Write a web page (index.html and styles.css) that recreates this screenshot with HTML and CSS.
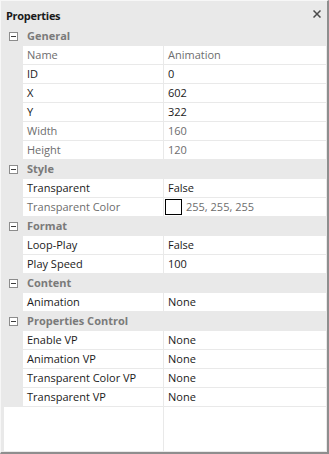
FILE: index.html
```html
<!DOCTYPE html>
<html lang="en">
<head>
  <meta charset="UTF-8"/>
  <title>Properties</title>
  <link rel="stylesheet" href="styles.css">
</head>
<body>
  <div class="panel">
    <div class="titlebar">
      <span class="title">Properties</span>
      <svg class="close" width="8" height="8" viewBox="0 0 8 8">
        <path d="M0.5 0.5 L7.5 7.5 M7.5 0.5 L0.5 7.5" stroke="#4a4a4a" stroke-width="1.5" fill="none"/>
      </svg>
    </div>

    <div class="grid">
      <!-- General -->
      <div class="cat"><span class="toggle"></span>General</div>
      <div class="row ro"><div class="name">Name</div><div class="value">Animation</div></div>
      <div class="row"><div class="name">ID</div><div class="value">0</div></div>
      <div class="row"><div class="name">X</div><div class="value">602</div></div>
      <div class="row"><div class="name">Y</div><div class="value">322</div></div>
      <div class="row ro"><div class="name">Width</div><div class="value">160</div></div>
      <div class="row ro"><div class="name">Height</div><div class="value">120</div></div>

      <!-- Style -->
      <div class="cat"><span class="toggle"></span>Style</div>
      <div class="row"><div class="name">Transparent</div><div class="value">False</div></div>
      <div class="row ro"><div class="name">Transparent Color</div><div class="value"><span class="swatch"></span>255, 255, 255</div></div>

      <!-- Format -->
      <div class="cat"><span class="toggle"></span>Format</div>
      <div class="row"><div class="name">Loop-Play</div><div class="value">False</div></div>
      <div class="row"><div class="name">Play Speed</div><div class="value">100</div></div>

      <!-- Content -->
      <div class="cat"><span class="toggle"></span>Content</div>
      <div class="row"><div class="name">Animation</div><div class="value">None</div></div>

      <!-- Properties Control -->
      <div class="cat"><span class="toggle"></span>Properties Control</div>
      <div class="row"><div class="name">Enable VP</div><div class="value">None</div></div>
      <div class="row"><div class="name">Animation VP</div><div class="value">None</div></div>
      <div class="row"><div class="name">Transparent Color VP</div><div class="value">None</div></div>
      <div class="row"><div class="name">Transparent VP</div><div class="value">None</div></div>

      <div class="filler"><div class="name"></div><div class="value"></div></div>
    </div>
  </div>
</body>
</html>
```

FILE: styles.css
```css
* { box-sizing: border-box; margin: 0; padding: 0; }
html, body { height: 100%; background: #e9e9e9; }
body { font-family: 'Open Sans', sans-serif; font-size: 11px; color: #1a1a1a; }

/* Panel frame */
.panel {
  width: 329px; height: 454px;
  display: flex; flex-direction: column;
  background: #e9e9e9;
  border-top: 1px solid #f7f7f7;
  border-left: 1px solid #f7f7f7;
  border-right: 2px solid #8e8e8e;
  border-bottom: 2px solid #8e8e8e;
  padding: 0 1px 1px 3px;
}

/* Title */
.titlebar {
  flex: 0 0 26px;
  display: flex; align-items: center; justify-content: space-between;
  padding: 2px 5px 0 2px;
}
.title { font-weight: bold; color: #1a1a1a; letter-spacing: -0.3px; }
.close { margin-top: -2px; }

/* Grid */
.grid {
  flex: 1 1 auto;
  display: flex; flex-direction: column;
}
.cat {
  height: 19px; line-height: 18px;
  display: flex; align-items: center;
  padding-left: 5px;
  font-weight: bold; color: #7a7a7a;
  border-bottom: 1px solid #e9e9e9;
}
.toggle {
  position: relative;
  width: 9px; height: 9px;
  margin-right: 9px;
  border: 1px solid #8c8c8c;
  background: #fff;
}
.toggle::after {
  content: ""; position: absolute;
  left: 1px; top: 3px; width: 5px; height: 1px;
  background: #3c3c3c;
}

.row {
  height: 19px; line-height: 18px;
  display: flex;
  border-bottom: 1px solid #e9e9e9;
}
.name {
  margin-left: 19px; width: 141px; flex: 0 0 141px;
  padding-left: 4px;
  background: #fff;
  border-right: 1px solid #e9e9e9;
  white-space: nowrap; overflow: hidden;
}
.value {
  flex: 1;
  padding-left: 4px;
  background: #fff;
  display: flex; align-items: center;
  white-space: nowrap;
}
.row.ro { color: #6d6d6d; }

.swatch {
  width: 17px; height: 16px;
  margin: 0 4px 0 -3px;
  border: 1px solid #000;
  background: #fff;
}

/* Empty area below the last row */
.filler { flex: 1; display: flex; }
.filler .name { margin-left: 0; flex-basis: 160px; width: 160px; }
```
